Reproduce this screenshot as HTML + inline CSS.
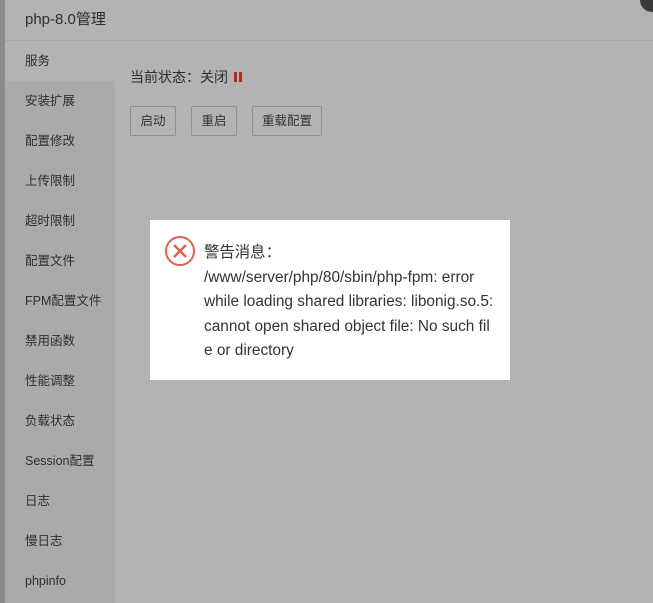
<!DOCTYPE html>
<html><head><meta charset="utf-8"><style>
*{margin:0;padding:0;box-sizing:border-box}
body{width:653px;height:603px;overflow:hidden;background:#b3b3b3;font-family:"Liberation Sans","Noto Sans CJK SC",sans-serif;position:relative;color:#333}
.strip{position:absolute;left:0;top:0;width:5px;height:603px;background:#8a8a8a}
.hdr{position:absolute;left:5px;top:0;width:648px;height:41px;background:#b3b3b3;border-bottom:1px solid #a6a6a6;font-size:15px;line-height:40px;padding-left:20px;color:#2e2e2e}
.side{position:absolute;left:5px;top:41px;width:110px;height:562px;background:#aaaaaa}
.side div{height:40px;line-height:41px;padding-left:20px;font-size:12.5px;color:#2e2e2e}
.side div.on{background:#b3b3b3}
.close{position:absolute;left:640px;top:-12px;width:24px;height:24px;border-radius:50%;background:#3a3a3a}
.st{position:absolute;left:130px;top:67px;font-size:14px;color:#2e2e2e}
.st i{display:inline-block;width:3px;height:10px;background:#b02a1a;margin-left:6px;box-shadow:5px 0 0 #b02a1a}
.btn{position:absolute;top:106px;height:30px;border:1px solid #8f8f8f;border-radius:2px;font-size:12.5px;line-height:28px;text-align:center;color:#333;background:#b3b3b3}
.dlg{position:absolute;left:150px;top:220px;width:360px;height:160px;background:#fff}
.msg{position:absolute;left:54px;top:18px;font-size:15.4px;line-height:24.5px;color:#333;width:306px;white-space:nowrap;padding-top:3px}
.ic{position:absolute;left:14px;top:15px}
</style></head><body>
<div class="strip"></div>
<div class="hdr">php-8.0管理</div>
<div class="close"></div>
<div class="side">
<div class="on">服务</div><div>安装扩展</div><div>配置修改</div><div>上传限制</div><div>超时限制</div><div>配置文件</div><div>FPM配置文件</div><div>禁用函数</div><div>性能调整</div><div>负载状态</div><div>Session配置</div><div>日志</div><div>慢日志</div><div>phpinfo</div>
</div>
<div class="st">当前状态：关闭<i></i></div>
<div class="btn" style="left:130px;width:46px">启动</div>
<div class="btn" style="left:191px;width:46px">重启</div>
<div class="btn" style="left:252px;width:70px">重载配置</div>
<div class="dlg">
<svg class="ic" width="32" height="32" viewBox="0 0 32 32"><circle cx="16" cy="16" r="14" fill="none" stroke="#e0604c" stroke-width="2"/><path d="M10 10L22 22M22 10L10 22" stroke="#e0604c" stroke-width="2.5"/></svg>
<div class="msg">警告消息：<br>/www/server/php/80/sbin/php-fpm: error<br>while loading shared libraries: libonig.so.5:<br>cannot open shared object file: No such fil<br>e or directory</div>
</div>
</body></html>
